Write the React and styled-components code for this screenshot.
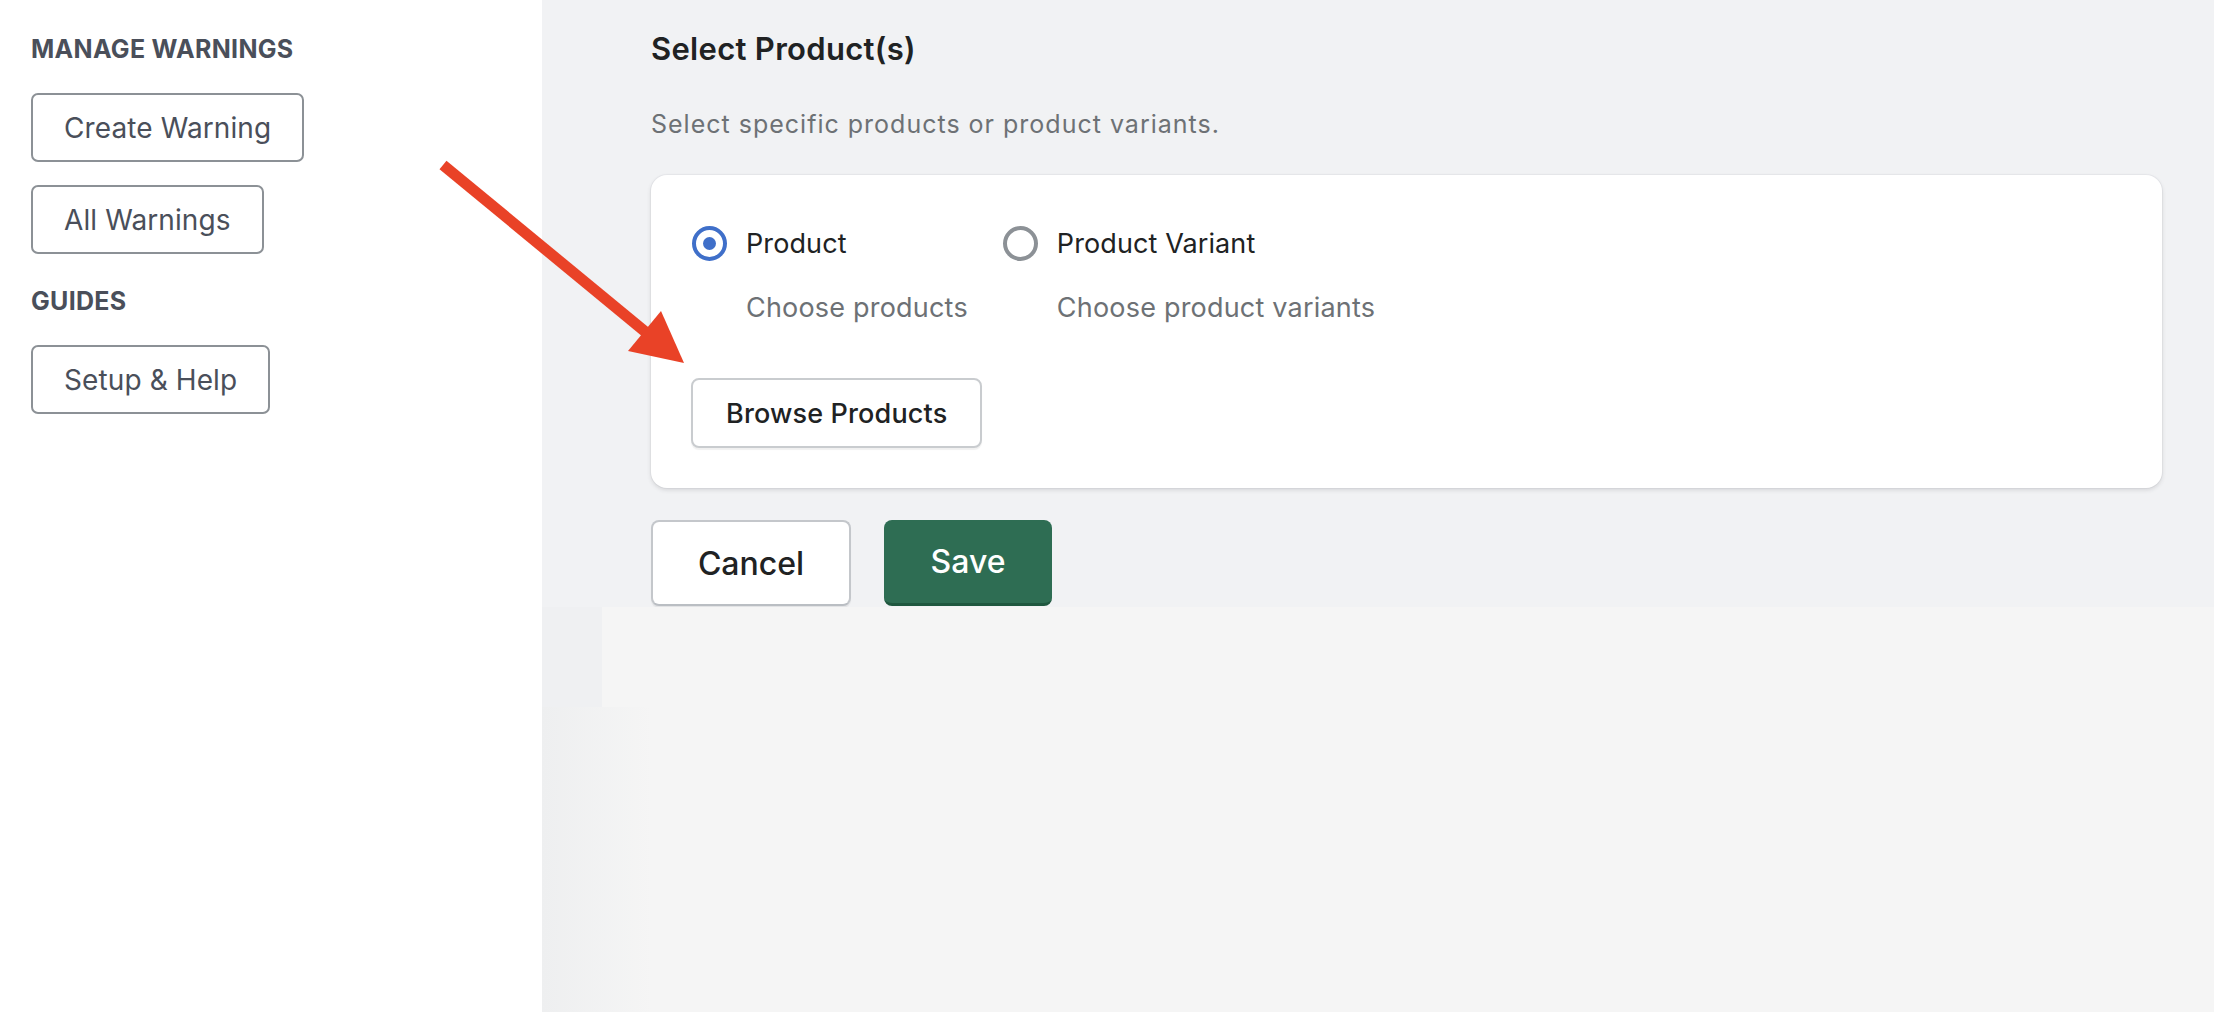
import React from 'react';
import styled, { createGlobalStyle } from "styled-components";

const GlobalStyle = createGlobalStyle`
  html, body {
    margin: 0;
    padding: 0;
    background: #ffffff;
  }
  body {
    font-family: Inter, "Noto Sans", "DejaVu Sans", sans-serif;
    -webkit-font-smoothing: antialiased;
  }
  * {
    box-sizing: border-box;
  }
`

const Page = styled.div`
  position: relative;
  display: flex;
  width: 100%;
  min-height: 1012px;
  overflow: hidden;
`

const Sidebar = styled.aside`
  width: 542px;
  flex-shrink: 0;
  background: #ffffff;
  padding: 34px 31px;
  display: flex;
  flex-direction: column;
  align-items: flex-start;
`

const SectionTitle = styled.h3`
  margin: ${p => p.$first ? "0" : "32px"} 0 29px 0;
  font-size: 25px;
  line-height: 30px;
  font-weight: 700;
  letter-spacing: 0.3px;
  color: #4a4f5a;
`

const NavList = styled.div`
  display: flex;
  flex-direction: column;
  align-items: flex-start;
  gap: 23px;
`

const NavButton = styled.button`
  height: 69px;
  padding: 0 31px;
  background: #ffffff;
  border: 2px solid #8c9196;
  border-radius: 7px;
  font-family: inherit;
  font-size: 28px;
  letter-spacing: 0.1px;
  color: #4a4f5a;
  cursor: pointer;
`

const Main = styled.main`
  flex: 1;
  display: flex;
  flex-direction: column;
`

const Content = styled.section`
  background: #f1f2f4;
  padding: 31px 52px 1px 109px;
`

const Heading = styled.h2`
  margin: 0;
  font-size: 31px;
  line-height: 36px;
  font-weight: 600;
  letter-spacing: 0.3px;
  color: #202223;
`

const SubText = styled.p`
  margin: 42px 0 36px 0;
  font-size: 25px;
  line-height: 30px;
  letter-spacing: 1px;
  color: #6d7175;
`

const Card = styled.div`
  background: #ffffff;
  border-radius: 16px;
  box-shadow: 0 0 0 1px rgba(63, 63, 68, 0.04), 0 2px 4px rgba(63, 63, 68, 0.16);
  padding: 51px 40px 40px 40px;
`

const Options = styled.div`
  display: flex;
  gap: 34px;
`

const Option = styled.label`
  display: grid;
  grid-template-columns: 35px auto;
  column-gap: 19px;
  row-gap: 31px;
  align-items: center;
  cursor: pointer;
  padding-left: 1px;
`

const Radio = styled.span`
  width: 35px;
  height: 35px;
  border-radius: 50%;
  border: 4px solid ${p => p.$checked ? "#3f6fc9" : "#8c9196"};
  display: flex;
  align-items: center;
  justify-content: center;
  &::after {
    content: "";
    width: 13px;
    height: 13px;
    border-radius: 50%;
    background: ${p => p.$checked ? "#3f6fc9" : "transparent"};
  }
`

const OptionLabel = styled.span`
  font-size: 27px;
  line-height: 32px;
  letter-spacing: 0.1px;
  color: #202223;
`

const OptionHint = styled.span`
  grid-column: 2;
  font-size: 27px;
  line-height: 32px;
  letter-spacing: 0.2px;
  color: #6d7175;
`

const BrowseButton = styled.button`
  margin-top: 54px;
  height: 70px;
  padding: 0 33px;
  background: #ffffff;
  border: 2px solid #c9cccf;
  border-radius: 8px;
  box-shadow: 0 2px 1px rgba(0, 0, 0, 0.06);
  font-family: inherit;
  font-size: 27px;
  font-weight: 500;
  letter-spacing: 0.15px;
  color: #202223;
  cursor: pointer;
`

const Actions = styled.div`
  display: flex;
  gap: 33px;
  margin-top: 32px;
`

const ActionButton = styled.button`
  height: 86px;
  width: ${p => p.$primary ? "168px" : "200px"};
  border-radius: 8px;
  font-family: inherit;
  font-size: 32px;
  font-weight: 500;
  cursor: pointer;
  background: ${p => p.$primary ? "#2e6d53" : "#ffffff"};
  color: ${p => p.$primary ? "#ffffff" : "#202223"};
  border: ${p => p.$primary ? "0" : "2px solid #c4c7cb"};
  border-bottom: ${p => p.$primary ? "3px solid #1f573f" : "2px solid #babec3"};
  box-shadow: ${p => p.$primary ? "none" : "0 2px 1px rgba(0, 0, 0, 0.06)"};
`

const Lower = styled.div`
  flex: 1;
  display: flex;
  flex-direction: column;
  background: linear-gradient(to right, #eeeff0, #f5f5f5 110px);
`

const LowerTop = styled.div`
  height: 100px;
  display: flex;
`

const LowerStrip = styled.div`
  width: 60px;
  background: #eff0f2;
`

const LowerFill = styled.div`
  flex: 1;
  background: #f5f5f5;
`

const ArrowLayer = styled.svg`
  position: absolute;
  top: 0;
  left: 0;
  pointer-events: none;
`

const Arrow = () => (
  <ArrowLayer width="2214" height="1012" viewBox="0 0 2214 1012">
    <line x1="443" y1="165" x2="648" y2="334" stroke="#e94227" strokeWidth="11" />
    <polygon points="684,363 661,311 628,351" fill="#e94227" />
  </ArrowLayer>
)

const App = () => {
  return (
    <>
      <GlobalStyle />
      <Page>
        <Sidebar>
          <SectionTitle $first>MANAGE WARNINGS</SectionTitle>
          <NavList>
            <NavButton>Create Warning</NavButton>
            <NavButton>All Warnings</NavButton>
          </NavList>
          <SectionTitle>GUIDES</SectionTitle>
          <NavList>
            <NavButton>Setup &amp; Help</NavButton>
          </NavList>
        </Sidebar>
        <Main>
          <Content>
            <Heading>Select Product(s)</Heading>
            <SubText>Select specific products or product variants.</SubText>
            <Card>
              <Options>
                <Option>
                  <Radio $checked />
                  <OptionLabel>Product</OptionLabel>
                  <OptionHint>Choose products</OptionHint>
                </Option>
                <Option>
                  <Radio />
                  <OptionLabel>Product Variant</OptionLabel>
                  <OptionHint>Choose product variants</OptionHint>
                </Option>
              </Options>
              <BrowseButton>Browse Products</BrowseButton>
            </Card>
            <Actions>
              <ActionButton>Cancel</ActionButton>
              <ActionButton $primary>Save</ActionButton>
            </Actions>
          </Content>
          <Lower>
            <LowerTop>
              <LowerStrip />
              <LowerFill />
            </LowerTop>
          </Lower>
        </Main>
        <Arrow />
      </Page>
    </>
  )
}

export default App
